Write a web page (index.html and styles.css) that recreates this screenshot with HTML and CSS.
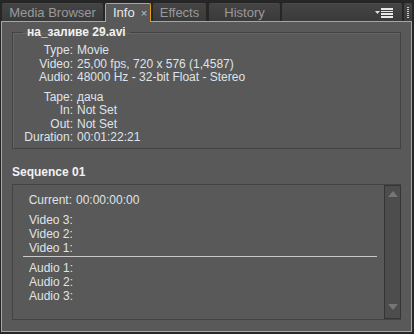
FILE: index.html
```html
<!DOCTYPE html>
<html lang="en">
<head>
    <meta charset="UTF-8">
    <title>Info</title>
    <link rel="stylesheet" href="styles.css">
</head>
<body>
    <div class="tabs">
        <div class="tab media">Media Browser</div>
        <div class="tab active"><span class="grip"></span>Info<span class="close">×</span></div>
        <div class="tab effects">Effects</div>
        <div class="tab history">History</div>
        <div class="tab filler">
            <svg class="menu" width="18" height="10" viewBox="0 0 18 10">
                <path d="M0 3h5l-2.5 3z" fill="#e0e0e0"/>
                <rect x="6" y="0" width="12" height="2" fill="#e8e8e8"/>
                <rect x="6" y="3" width="12" height="1" fill="#e8e8e8"/>
                <rect x="6" y="5" width="12" height="2" fill="#e8e8e8"/>
                <rect x="6" y="8" width="12" height="2" fill="#e8e8e8"/>
            </svg>
        </div>
        <div class="tab end"><span class="grip"></span></div>
    </div>

    <div class="panel">
        <fieldset class="clip">
            <legend>на_заливе 29.avi</legend>
            <div class="rows">
                <div class="row"><span class="key">Type:</span><span>Movie</span></div>
                <div class="row"><span class="key">Video:</span><span>25,00 fps, 720 x 576 (1,4587)</span></div>
                <div class="row"><span class="key">Audio:</span><span>48000 Hz - 32-bit Float - Stereo</span></div>
            </div>
            <div class="rows">
                <div class="row"><span class="key">Tape:</span><span>дача</span></div>
                <div class="row"><span class="key">In:</span><span>Not Set</span></div>
                <div class="row"><span class="key">Out:</span><span>Not Set</span></div>
                <div class="row"><span class="key">Duration:</span><span>00:01:22:21</span></div>
            </div>
        </fieldset>

        <h2>Sequence 01</h2>
        <div class="seq">
            <div class="seq-body">
                <div class="row current"><span class="key">Current:</span><span>00:00:00:00</span></div>
                <div class="tracks">
                    <div>Video 3:</div>
                    <div>Video 2:</div>
                    <div>Video 1:</div>
                </div>
                <div class="divider"></div>
                <div class="tracks">
                    <div>Audio 1:</div>
                    <div>Audio 2:</div>
                    <div>Audio 3:</div>
                </div>
            </div>
            <div class="scrollbar">
                <span class="arrow up"></span>
                <span class="arrow down"></span>
            </div>
        </div>
    </div>
</body>
</html>
```

FILE: styles.css
```css
* {
    margin: 0;
    padding: 0;
    box-sizing: border-box;
}

body {
    width: 414px;
    height: 334px;
    background: #262626;
    font-family: 'Liberation Sans', Arial, sans-serif;
    font-size: 12px;
    color: #dfe4ea;
    padding: 3px 2px 0 1px;
}

.tabs {
    display: flex;
    height: 18px;
    gap: 2px;
    padding-left: 1px;
}

.tab {
    background: linear-gradient(#444, #3a3a3a);
    border-top: 1px solid #4a4a4a;
    color: #9a9a9a;
    font-size: 13px;
    line-height: 18px;
    text-align: center;
    border-radius: 2px 2px 0 0;
}

.media {
    width: 101px;
}

.effects {
    width: 53px;
}

.history {
    width: 71px;
    margin-left: 1px;
}

.tab.active {
    background: #595959;
    border: 1px solid #e6a01a;
    border-bottom: none;
    color: #e8e8e8;
    padding: 0 3px 0 2px;
    display: flex;
    align-items: center;
    width: 46px;
    height: 19px;
    position: relative;
    z-index: 1;
}

.grip {
    width: 2px;
    height: 11px;
    margin-right: 5px;
    background: repeating-linear-gradient(#d0d0d0 0 1px, transparent 1px 2px);
}

.close {
    margin-left: 6px;
    font-size: 11px;
    color: #c0c0c0;
}

.filler {
    flex: 1;
    display: flex;
    justify-content: flex-end;
    align-items: center;
    padding-right: 9px;
}

.end {
    width: 8px;
    padding: 0 3px;
    display: flex;
    align-items: center;
}

.end .grip {
    margin: 0;
}

.panel {
    height: 311px;
    background: #595959;
    border: 1px solid #e6a01a;
    padding: 3px 10px 10px 10px;
}

fieldset.clip {
    border: 1px solid #434343;
    box-shadow: 1px 1px 0 #666 inset;
    padding: 0 0 6px 0;
    height: 124px;
}

legend {
    font-weight: bold;
    font-size: 12px;
    color: #f2f2f2;
    margin-left: 10px;
    padding: 0 4px;
    line-height: 14px;
}

.rows {
    padding-top: 5px;
}

.rows + .rows {
    padding-top: 6px;
}

.row {
    display: flex;
    gap: 4px;
    line-height: 13.5px;
}

.key {
    width: 60px;
    text-align: right;
}

h2 {
    font-size: 12px;
    font-weight: bold;
    color: #f2f2f2;
    line-height: 14px;
    margin: 16px 0 5px 0;
}

.seq {
    display: flex;
    height: 136px;
    border: 1px solid #434343;
    border-right: none;
}

.seq-body {
    flex: 1;
    padding-top: 9px;
}

.current .key {
    width: 59px;
}

.tracks {
    padding-left: 16px;
    line-height: 14px;
}

.current + .tracks {
    margin-top: 5px;
}

.divider {
    height: 1px;
    background: #c9c9c9;
    margin: 1px 7px 4px 10px;
}

.scrollbar {
    width: 17px;
    background: #4d4d4d;
    border: 1px solid #353535;
    display: flex;
    flex-direction: column;
    justify-content: space-between;
    align-items: center;
    padding: 5px 0 8px;
}

.arrow {
    width: 0;
    height: 0;
    border-left: 5px solid transparent;
    border-right: 5px solid transparent;
}

.arrow.up {
    border-bottom: 6px solid #767676;
}

.arrow.down {
    border-top: 6px solid #767676;
}
```
